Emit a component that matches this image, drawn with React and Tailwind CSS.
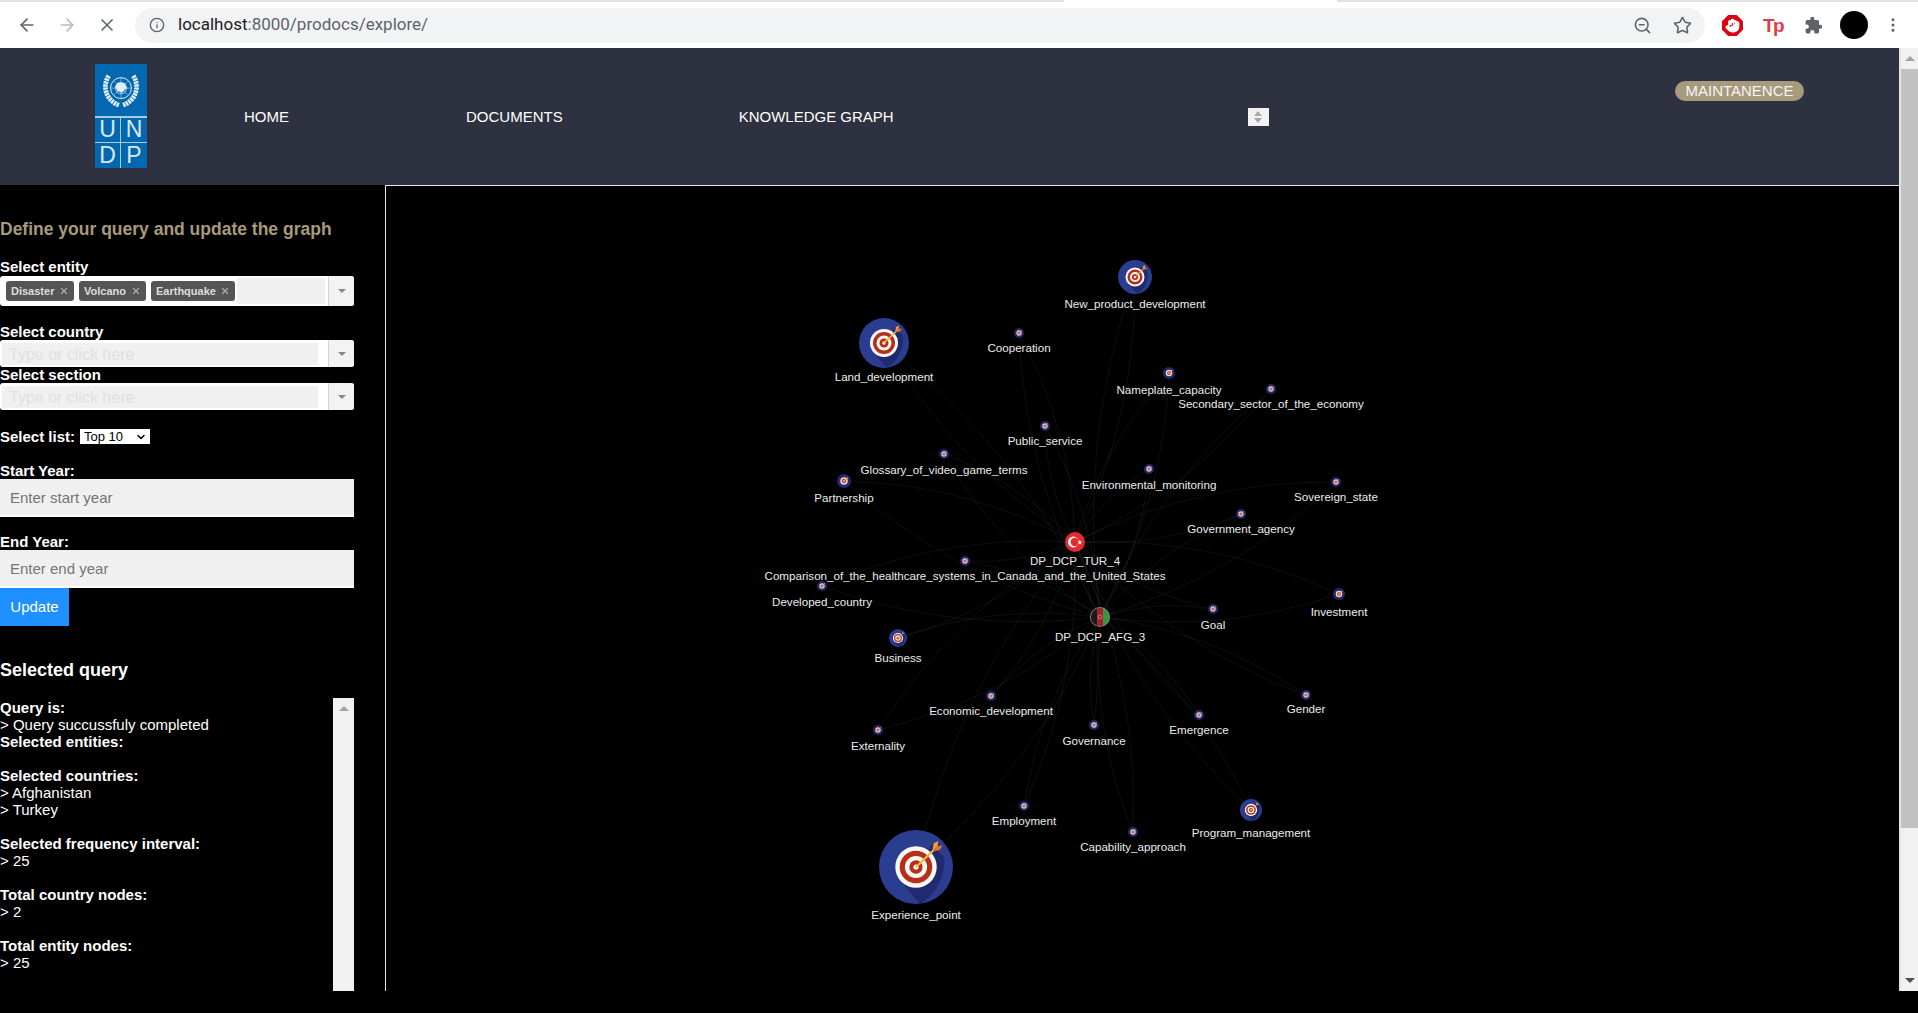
import React from 'react';
import { ArrowLeft, ArrowRight, X, Info, ZoomOut, Star, Hand, MoreVertical, ChevronDown } from 'lucide-react';

const PANEL_X = 386;
const PANEL_Y = 186;

// x, y = node centre, r = radius, ly = label centre (all page coords)
const nodes = [
  { name: 'New_product_development', x: 1135, y: 277, r: 17, ly: 304 },
  { name: 'Land_development', x: 884, y: 343, r: 25, ly: 377 },
  { name: 'Cooperation', x: 1019, y: 333, r: 5, ly: 348 },
  { name: 'Nameplate_capacity', x: 1169, y: 373, r: 6, ly: 390 },
  { name: 'Secondary_sector_of_the_economy', x: 1271, y: 389, r: 5, ly: 404 },
  { name: 'Public_service', x: 1045, y: 426, r: 5, ly: 441 },
  { name: 'Glossary_of_video_game_terms', x: 944, y: 454, r: 5, ly: 470 },
  { name: 'Environmental_monitoring', x: 1149, y: 469, r: 5, ly: 485 },
  { name: 'Partnership', x: 844, y: 481, r: 7, ly: 498 },
  { name: 'Sovereign_state', x: 1336, y: 482, r: 5, ly: 497 },
  { name: 'Government_agency', x: 1241, y: 514, r: 5, ly: 529 },
  { name: 'Comparison_of_the_healthcare_systems_in_Canada_and_the_United_States', x: 965, y: 561, r: 5, ly: 576 },
  { name: 'Developed_country', x: 822, y: 586, r: 5, ly: 602 },
  { name: 'Investment', x: 1339, y: 594, r: 6, ly: 612 },
  { name: 'Goal', x: 1213, y: 609, r: 5, ly: 625 },
  { name: 'Business', x: 898, y: 638, r: 9, ly: 658 },
  { name: 'Gender', x: 1306, y: 695, r: 5, ly: 709 },
  { name: 'Economic_development', x: 991, y: 696, r: 5, ly: 711 },
  { name: 'Emergence', x: 1199, y: 715, r: 5, ly: 730 },
  { name: 'Governance', x: 1094, y: 725, r: 5, ly: 741 },
  { name: 'Externality', x: 878, y: 730, r: 5, ly: 746 },
  { name: 'Employment', x: 1024, y: 806, r: 5, ly: 821 },
  { name: 'Program_management', x: 1251, y: 810, r: 11, ly: 833 },
  { name: 'Capability_approach', x: 1133, y: 832, r: 5, ly: 847 },
  { name: 'Experience_point', x: 916, y: 867, r: 37, ly: 915 },
];

const TUR = { x: 1075, y: 542 };
const AFG = { x: 1100, y: 617 };

const curve = (a, b, bend) => {
  const mx = (a.x + b.x) / 2 - (b.y - a.y) * bend;
  const my = (a.y + b.y) / 2 + (b.x - a.x) * bend;
  return `M${a.x - PANEL_X} ${a.y - PANEL_Y}Q${mx - PANEL_X} ${my - PANEL_Y} ${b.x - PANEL_X} ${b.y - PANEL_Y}`;
};

const TargetIcon = () => (
  <svg viewBox="0 0 100 100" className="block w-full h-full">
    <circle cx="50" cy="50" r="50" fill="#2b3d90" />
    <path d="M30 70L72 20L88 36C90 60 78 88 55 99.500Z" fill="#1f2a70" />
    <circle cx="50" cy="50" r="28" fill="#fbf7f2" />
    <circle cx="50" cy="50" r="22" fill="#b5301a" />
    <circle cx="50" cy="50" r="15" fill="#fbf7f2" />
    <circle cx="50" cy="50" r="9" fill="#b5301a" />
    <circle cx="50" cy="50" r="3.500" fill="#fbf7f2" />
    <path d="M50 50L74 27" stroke="#f4b942" strokeWidth="3" />
    <path d="M72 29L74 18L80 15L79 22Z" fill="#f4a02c" />
    <path d="M72 29L82 27L86 21L79 22Z" fill="#e8752a" />
  </svg>
);

// small nodes are drawn darker, the reference's scaled-down icon has no light rim
const SmallTargetIcon = () => (
  <svg viewBox="0 0 100 100" className="block w-full h-full">
    <circle cx="50" cy="50" r="50" fill="#1f2a70" />
    <circle cx="50" cy="50" r="27" fill="#f0d6d2" />
    <circle cx="50" cy="50" r="16" fill="#b5402a" />
    <circle cx="50" cy="50" r="6" fill="#fbf7f2" />
    <path d="M56 44L78 24" stroke="#f4a02c" strokeWidth="9" />
  </svg>
);

const TurkeyIcon = () => (
  <svg viewBox="0 0 100 100" className="block w-full h-full">
    <circle cx="50" cy="50" r="50" fill="#e32a2f" />
    <circle cx="42" cy="50" r="27" fill="#fff" />
    <circle cx="49" cy="50" r="21" fill="#e32a2f" />
    <path d="M74 38l3 9 10 0-8 6 3 10-8-6-8 6 3-10-8-6 10 0z" fill="#fff" />
  </svg>
);

const AfghanIcon = () => (
  <svg viewBox="0 0 100 100" className="block w-full h-full">
    <clipPath id="afg">
      <circle cx="50" cy="50" r="46" />
    </clipPath>
    <circle cx="50" cy="50" r="50" fill="#8c8c8c" />
    <g clipPath="url(#afg)">
      <rect x="0" y="0" width="36" height="100" fill="#1a1a1a" />
      <rect x="36" y="0" width="30" height="100" fill="#a8202a" />
      <rect x="66" y="0" width="34" height="100" fill="#2f9a3c" />
    </g>
    <circle cx="50" cy="50" r="9" fill="none" stroke="#d9a9a0" strokeWidth="3" />
  </svg>
);

const GraphNode = ({ node }) => (
  <>
    <div
      className="absolute"
      style={{
        left: node.x - PANEL_X - node.r,
        top: node.y - PANEL_Y - node.r,
        width: node.r * 2,
        height: node.r * 2,
      }}
    >
      {node.icon || (node.r < 8 ? <SmallTargetIcon /> : <TargetIcon />)}
    </div>
    <div
      className="absolute -translate-x-1/2 -translate-y-1/2 whitespace-nowrap text-[11.600px] leading-none text-[#ececec]"
      style={{ left: node.x - PANEL_X, top: node.ly - PANEL_Y }}
    >
      {node.name}
    </div>
  </>
);

const ChromeBar = () => (
  <div className="h-[48px] shrink-0 bg-white flex flex-col">
    <div className="h-[2px] flex">
      <div className="w-[1064px] bg-[#dee1e6]" />
      <div className="w-[273px] bg-white" />
      <div className="flex-1 bg-[#dee1e6]" />
    </div>
    <div className="flex-1 flex items-center">
      <div className="w-[135px] shrink-0 flex items-center pl-[17px] gap-[20px]">
        <ArrowLeft className="w-5 h-5 text-[#5f6368]" />
        <ArrowRight className="w-5 h-5 text-[#b8babd]" />
        <X className="w-5 h-5 text-[#5f6368]" />
      </div>
      <div className="w-[1570px] h-[35px] shrink-0 rounded-full bg-[#f1f3f4] flex items-center pl-[14px]">
        <Info className="w-4 h-4 text-[#5f6368] mr-[13px]" />
        <span className="text-[17px] text-[#5f6368] [font-family:Roboto,sans-serif]">
          <span className="text-[#202124]">localhost</span>:8000/prodocs/explore/
        </span>
        <div className="ml-auto flex items-center gap-[21px] pr-[13px]">
          <ZoomOut className="w-[19px] h-[19px] text-[#5f6368]" />
          <Star className="w-[19px] h-[19px] text-[#5f6368]" />
        </div>
      </div>
      <div className="flex-1 flex items-center pl-[17px]">
        <svg viewBox="0 0 22 22" className="w-[21px] h-[21px]">
          <path d="M6.500 0H15.500L22 6.500V15.500L15.500 22H6.500L0 15.500V6.500Z" fill="#e2000f" />
        </svg>
        <Hand className="w-[15px] h-[15px] -ml-[18px] text-white fill-white" />
        <span className="ml-[23px] w-[21px] text-[19px] font-bold leading-none tracking-[-1.500px] text-[#e8394a]">Tp</span>
        <svg viewBox="0 0 24 24" className="ml-[20px] w-[19px] h-[19px]" fill="#5f6368">
          <path d="M20.500 11H19V7a2 2 0 0 0-2-2h-4V3.500a2.500 2.500 0 0 0-5 0V5H4a2 2 0 0 0-2 2v3.800h1.500a2.700 2.700 0 0 1 0 5.400H2V20a2 2 0 0 0 2 2h3.800v-1.500a2.700 2.700 0 0 1 5.400 0V22H17a2 2 0 0 0 2-2v-4h1.500a2.500 2.500 0 0 0 0-5z" />
        </svg>
        <div className="ml-[17px] w-[28px] h-[28px] rounded-full bg-black" />
        <MoreVertical className="ml-[16px] w-[18px] h-[18px] text-[#5f6368]" />
      </div>
    </div>
  </div>
);

const UndpLogo = () => (
  <div className="w-[52px] h-[104px] bg-[#0468b1] flex flex-col text-[#d8e8f4] text-[23px] leading-none">
    <div className="h-[52px] flex items-center justify-center">
      <svg viewBox="0 0 40 44" className="w-[38px] h-[42px]" fill="none" stroke="#e4eef6">
        <circle cx="20" cy="20" r="11" strokeWidth="1" />
        <circle cx="20" cy="20" r="6" strokeWidth="0.700" />
        <path d="M9 20H31M20 9V31M13 13L27 27M27 13L13 27" strokeWidth="0.500" />
        <path d="M17 14l7 1 2 5-5 5-5-2-2-5z" fill="#e4eef6" stroke="none" />
        <path d="M7 7C0 18 4 33 18 38M33 7C40 18 36 33 22 38" strokeWidth="5" strokeDasharray="2.500 0.700" />
      </svg>
    </div>
    <div className="flex-1 grid grid-cols-2 grid-rows-2 border-t-2 border-[#a9cce6]">
      <div className="flex items-center justify-center border-r border-b border-[#a9cce6]">U</div>
      <div className="flex items-center justify-center border-b border-[#a9cce6]">N</div>
      <div className="flex items-center justify-center border-r border-[#a9cce6]">D</div>
      <div className="flex items-center justify-center">P</div>
    </div>
  </div>
);

const Header = () => (
  <div className="h-[137px] shrink-0 bg-[#2e3140] relative flex items-center text-white text-[15px]">
    <div className="ml-[95px] -mt-[2px]">
      <UndpLogo />
    </div>
    <span className="ml-[97px] mt-[2px]">HOME</span>
    <span className="ml-[177px] mt-[2px]">DOCUMENTS</span>
    <span className="ml-[176px] mt-[2px]">KNOWLEDGE GRAPH</span>
    <div className="ml-[354px] w-[21px] h-[18px] bg-[#f2f2f2] flex flex-col items-center justify-center gap-[2px]">
      <span className="border-x-[4px] border-x-transparent border-b-[5px] border-b-[#a8a8a8]" />
      <span className="border-x-[4px] border-x-transparent border-t-[5px] border-t-[#a8a8a8]" />
    </div>
    <div className="absolute left-[1675px] top-[33px] w-[129px] h-[20px] rounded-full bg-[#a89a7c] flex items-center justify-center text-[15px] text-[#f5f5f5]">
      MAINTANENCE
    </div>
  </div>
);

const ComboBox = ({ className, children }) => (
  <div className={`w-[354px] bg-white rounded-[3px] flex ${className}`}>
    <div className="flex-1 min-w-0">{children}</div>
    <div className="w-[26px] shrink-0 bg-[#f3f3f3] border-l border-[#d4d4d4] rounded-r-[3px] flex items-center justify-center">
      <span className="border-x-[4px] border-x-transparent border-t-[4px] border-t-[#888]" />
    </div>
  </div>
);

const Tag = ({ label, className }) => (
  <div className={`h-[20px] rounded-[3px] bg-[#555] flex items-center justify-between px-[5px] text-[11px] font-bold text-[#ddd] ${className}`}>
    <span>{label}</span>
    <X className="w-[10px] h-[10px] text-[#aaa]" strokeWidth={3} />
  </div>
);

const PlaceholderBox = () => (
  <ComboBox className="h-[27px]">
    <div className="h-[24px] mt-[3px] ml-[2px] w-[316px] bg-[#f0f0f0] border-b-2 border-white pl-[7px] text-[16px] leading-[24px] text-[#e0e0e0]">
      Type or click here
    </div>
  </ComboBox>
);

const YearInput = ({ placeholder }) => (
  <input
    placeholder={placeholder}
    className="block w-[354px] h-[38px] bg-[#f0f0f0] border-b-2 border-white pl-[10px] text-[15px] text-[#333] placeholder:text-[#757575] outline-none"
  />
);

const Label = ({ className, children }) => (
  <div className={`text-[15px] font-bold leading-[17px] text-white ${className}`}>{children}</div>
);

const QueryLine = ({ bold, children }) => (
  <div className={`h-[17px] whitespace-nowrap ${bold ? 'font-bold' : ''}`}>{children}</div>
);

const Sidebar = () => (
  <div className="w-[385px] shrink-0 pt-[34px] text-white">
    <h2 className="text-[17.500px] font-bold leading-[20px] text-[#a89a7c]">Define your query and update the graph</h2>
    <Label className="mt-[19px]">Select entity</Label>
    <ComboBox className="h-[30px] mt-[1px]">
      <div className="flex items-center gap-[5px] h-full pl-[6px] pr-[3px]">
        <Tag label="Disaster" className="w-[68px]" />
        <Tag label="Volcano" className="w-[67px]" />
        <Tag label="Earthquake" className="w-[84px]" />
        <div className="flex-1 h-[26px] -ml-[3px] bg-[#f0f0f0]" />
      </div>
    </ComboBox>
    <Label className="mt-[17px]">Select country</Label>
    <PlaceholderBox />
    <Label className="-mt-[1px]">Select section</Label>
    <PlaceholderBox />
    <div className="flex items-center mt-[18px] h-[17px]">
      <Label>Select list:</Label>
      <div className="ml-[5px] w-[70px] h-[15px] bg-white flex items-center justify-between pl-[4px] pr-[3px] text-[13px] text-black">
        <span>Top 10</span>
        <ChevronDown className="w-[12px] h-[12px]" strokeWidth={3} />
      </div>
    </div>
    <Label className="mt-[17px]">Start Year:</Label>
    <YearInput placeholder="Enter start year" />
    <Label className="mt-[16px]">End Year:</Label>
    <YearInput placeholder="Enter end year" />
    <div className="w-[69px] h-[38px] bg-[#1e90ff] flex items-center justify-center text-[15px] text-white">Update</div>
    <h3 className="mt-[33px] text-[18px] font-bold leading-[22px]">Selected query</h3>
    <div className="w-[354px] h-[293px] mt-[17px] flex text-[15px] leading-[17px] overflow-hidden">
      <div className="flex-1 pt-[1px]">
        <QueryLine bold>Query is:</QueryLine>
        <QueryLine>&gt; Query succussfuly completed</QueryLine>
        <QueryLine bold>Selected entities:</QueryLine>
        <QueryLine />
        <QueryLine bold>Selected countries:</QueryLine>
        <QueryLine>&gt; Afghanistan</QueryLine>
        <QueryLine>&gt; Turkey</QueryLine>
        <QueryLine />
        <QueryLine bold>Selected frequency interval:</QueryLine>
        <QueryLine>&gt; 25</QueryLine>
        <QueryLine />
        <QueryLine bold>Total country nodes:</QueryLine>
        <QueryLine>&gt; 2</QueryLine>
        <QueryLine />
        <QueryLine bold>Total entity nodes:</QueryLine>
        <QueryLine>&gt; 25</QueryLine>
      </div>
      <div className="w-[21px] bg-[#f1f1f1] flex justify-center pt-[8px]">
        <span className="h-0 border-x-[5px] border-x-transparent border-b-[5px] border-b-[#a3a3a3]" />
      </div>
    </div>
  </div>
);

const GraphPanel = () => (
  <div className="flex-1 relative border-l border-t border-[#e6e6e6] bg-black overflow-hidden">
    <svg className="absolute inset-0 w-full h-full" fill="none" stroke="#ffffff" strokeOpacity="0.055">
      {nodes.map((node, i) => (
        <g key={node.name}>
          <path d={curve(node, TUR, i % 2 ? 0.12 : -0.12)} />
          <path d={curve(node, AFG, i % 2 ? -0.12 : 0.12)} />
        </g>
      ))}
    </svg>
    {nodes.map((node) => (
      <GraphNode key={node.name} node={node} />
    ))}
    <GraphNode node={{ name: 'DP_DCP_TUR_4', x: TUR.x, y: TUR.y, r: 10, ly: 561, icon: <TurkeyIcon /> }} />
    <GraphNode node={{ name: 'DP_DCP_AFG_3', x: AFG.x, y: AFG.y, r: 10, ly: 637, icon: <AfghanIcon /> }} />
  </div>
);

const PageScrollbar = () => (
  <div className="w-[19px] shrink-0 bg-[#f1f1f1] flex flex-col border-l-2 border-[#e4e4e4]">
    <div className="h-[21px] shrink-0 flex justify-center items-center">
      <span className="border-x-[5px] border-x-transparent border-b-[5px] border-b-[#a3a3a3]" />
    </div>
    <div className="h-[759px] shrink-0 bg-[#c1c1c1]" />
    <div className="flex-1 flex items-end justify-center pb-[8px]">
      <span className="border-x-[5px] border-x-transparent border-t-[5px] border-t-[#505050]" />
    </div>
  </div>
);

const App = () => (
  <div className="h-screen overflow-hidden bg-black flex flex-col [font-family:'Liberation_Sans',Arial,sans-serif]">
    <ChromeBar />
    <div className="h-[943px] shrink-0 flex">
      <div className="w-[1899px] shrink-0 flex flex-col min-w-0">
        <Header />
        <div className="flex-1 flex min-h-0">
          <Sidebar />
          <GraphPanel />
        </div>
      </div>
      <PageScrollbar />
    </div>
  </div>
);

export default App;
